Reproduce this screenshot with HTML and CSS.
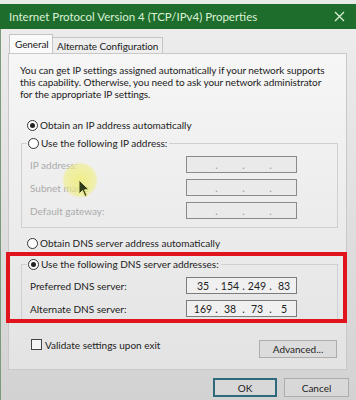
FILE: index.html
```html
<!DOCTYPE html>
<html lang="en">
<head>
  <meta charset="UTF-8">
  <meta name="viewport" content="width=device-width, initial-scale=1.0">
  <title>Internet Protocol Version 4 (TCP/IPv4) Properties</title>
  <link rel="stylesheet" href="styles.css">
</head>
<body>
  <div class="top-strip"></div>
  <div class="window">
    <div class="titlebar">
      <span class="title">Internet Protocol Version 4 (TCP/IPv4) Properties</span>
      <svg class="close" width="11" height="11" viewBox="0 0 11 11">
        <path d="M1 1 L10 10 M10 1 L1 10" stroke="#d9efd2" stroke-width="1.3" fill="none"/>
      </svg>
    </div>
    <div class="client">
      <div class="tabs">
        <div class="tab active">General</div>
        <div class="tab">Alternate Configuration</div>
      </div>
      <div class="panel">
        <p class="intro">You can get IP settings assigned automatically if your network supports<br>this capability. Otherwise, you need to ask your network administrator<br>for the appropriate IP settings.</p>

        <div class="option"><span class="radio checked"></span>Obtain an IP address automatically</div>

        <fieldset class="group disabled">
          <legend><span class="radio"></span>Use the following IP address:</legend>
          <div class="row">
            <span class="label">IP address:</span>
            <div class="ipbox"><span></span><i>.</i><span></span><i>.</i><span></span><i>.</i><span></span></div>
          </div>
          <div class="row">
            <span class="label">Subnet mask:</span>
            <div class="ipbox"><span></span><i>.</i><span></span><i>.</i><span></span><i>.</i><span></span></div>
          </div>
          <div class="row">
            <span class="label">Default gateway:</span>
            <div class="ipbox"><span></span><i>.</i><span></span><i>.</i><span></span><i>.</i><span></span></div>
          </div>
        </fieldset>

        <div class="option dns-auto"><span class="radio"></span>Obtain DNS server address automatically</div>

        <fieldset class="group dns">
          <legend><span class="radio checked"></span>Use the following DNS server addresses:</legend>
          <div class="row">
            <span class="label">Preferred DNS server:</span>
            <div class="ipbox"><span>35</span><i>.</i><span>154</span><i>.</i><span>249</span><i>.</i><span>83</span></div>
          </div>
          <div class="row">
            <span class="label">Alternate DNS server:</span>
            <div class="ipbox"><span>169</span><i>.</i><span>38</span><i>.</i><span>73</span><i>.</i><span>5</span></div>
          </div>
        </fieldset>

        <div class="footer-row">
          <div class="check"><span class="checkbox"></span>Validate settings upon exit</div>
          <button class="btn advanced">Advanced...</button>
        </div>
      </div>
      <div class="buttons">
        <button class="btn ok">OK</button>
        <button class="btn">Cancel</button>
      </div>
    </div>
  </div>

  <div class="highlight"></div>
  <div class="spot"></div>
  <svg class="cursor" width="12" height="20" viewBox="0 0 12 20">
    <path d="M1 1 L1 15 L4.5 11.5 L7 17.5 L9 16.5 L6.5 10.8 L11 10.8 Z" fill="#2f3a1a" stroke="#e8e88a" stroke-width="1"/>
  </svg>
</body>
</html>
```

FILE: styles.css
```css
body {
  margin: 0;
  position: relative;
  width: 356px;
  height: 400px;
  overflow: hidden;
  background: #d6d6d6;
  font-family: Lato, "Liberation Sans", sans-serif;
  font-size: 10px;
  color: #222;
}

.top-strip {
  height: 4px;
  background: #e6ebe6;
}

.window {
  background: linear-gradient(#eeeeee, #d2d2d2);
  border-left: 1px solid #7d9a7d;
  height: 396px;
}

.titlebar {
  display: flex;
  align-items: center;
  justify-content: space-between;
  height: 25px;
  padding: 0 11px 0 9px;
  margin-left: -1px;
  background: #1e6d2d;
}
.titlebar .title {
  color: #dcf1d4;
  font-size: 11.5px;
}

.client {
  padding: 0 9px 0 7px;
}

.tabs {
  display: flex;
  align-items: flex-end;
  height: 24px;
  margin-left: 1px;
}
.tab {
  box-sizing: border-box;
  height: 16px;
  padding: 2px 4px 0;
  border: 1px solid #c4c4c4;
  border-bottom: none;
  background: #eeeeee;
  line-height: 12px;
  letter-spacing: -0.1px;
}
.tab.active {
  width: 44px;
  height: 19px;
  padding: 3px 5px 0;
  background: #fafafa;
  margin-right: -1px;
  position: relative;
  z-index: 1;
}

.panel {
  box-sizing: border-box;
  height: 317px;
  padding: 10px 0 0;
  border: 1px solid #c8c8c8;
  background: linear-gradient(#f6f6f6, #e3e3e3);
}

.intro {
  margin: 0 0 18px 11px;
  line-height: 12px;
  letter-spacing: -0.08px;
}

.option {
  display: flex;
  align-items: center;
  height: 14px;
  padding-left: 18px;
}
.option.dns-auto {
  margin-top: 8px;
}

.radio {
  box-sizing: border-box;
  width: 11px;
  height: 11px;
  margin-right: 2px;
  border: 1px solid #333;
  border-radius: 50%;
  background: #fff;
  display: inline-flex;
  align-items: center;
  justify-content: center;
  flex: none;
}
.radio.checked::after {
  content: '';
  width: 5px;
  height: 5px;
  border-radius: 50%;
  background: #222;
}

.group {
  margin: 4px 8px 0 12px;
  padding: 0 0 8px;
  border: 1px solid #d0d0d0;
  min-width: 0;
}
.group.dns {
  margin-top: 7px;
  padding-bottom: 4px;
}
.group legend {
  display: flex;
  align-items: center;
  height: 14px;
  margin-left: 5px;
  padding: 0 2px 0 1px;
}

.row {
  display: flex;
  align-items: center;
  height: 17px;
  margin-top: 6px;
  padding-left: 8px;
}
.row .label {
  width: 156px;
}
.group.disabled .row .label {
  color: #ababab;
}

.ipbox {
  box-sizing: border-box;
  display: flex;
  align-items: center;
  width: 111px;
  height: 17px;
  padding-left: 6px;
  border: 1px solid #7c7c7c;
  background: #ececec;
  font-size: 10.5px;
}
.ipbox span {
  width: 20px;
  text-align: center;
}
.ipbox i {
  width: 7px;
  font-style: normal;
  text-align: center;
}
.group.disabled .ipbox {
  border-color: #8a8a8a;
  background: #eaeaea;
}
.group.disabled .ipbox i {
  color: #9a9a9a;
}
.group.dns .ipbox {
  background: #f0f0f0;
}

.footer-row {
  display: flex;
  justify-content: space-between;
  align-items: flex-start;
  margin: 17px 9px 0 22px;
}
.check {
  display: flex;
  align-items: center;
  height: 11px;
}
.checkbox {
  box-sizing: border-box;
  width: 11px;
  height: 11px;
  margin-right: 3px;
  border: 1px solid #444;
  background: #f4f4f4;
}

.btn {
  box-sizing: border-box;
  height: 18px;
  margin: 1px 0 0;
  padding: 0;
  border: 1px solid #adadad;
  background: #dcdcdc;
  font-family: inherit;
  font-size: 10px;
  color: #222;
}
.btn.advanced {
  width: 78px;
}

.buttons {
  display: flex;
  justify-content: flex-end;
  gap: 7px;
  margin-top: 7px;
  margin-right: -2px;
}
.buttons .btn {
  width: 65px;
  height: 19px;
  background: #d8d8d8;
}
.buttons .btn.ok {
  width: 64px;
  border: 2px solid #2f6a7c;
}

/* red annotation frame */
.highlight {
  position: absolute;
  left: 6px;
  top: 252px;
  width: 341px;
  height: 71px;
  box-sizing: border-box;
  border: 4px solid #e0141c;
}

/* cursor spotlight */
.spot {
  position: absolute;
  left: 62px;
  top: 162px;
  width: 36px;
  height: 36px;
  border-radius: 50%;
  background: radial-gradient(rgba(240, 238, 120, 0.85), rgba(240, 238, 120, 0.55) 60%, rgba(240, 238, 120, 0) 72%);
}
.cursor {
  position: absolute;
  left: 78px;
  top: 179px;
}
```
